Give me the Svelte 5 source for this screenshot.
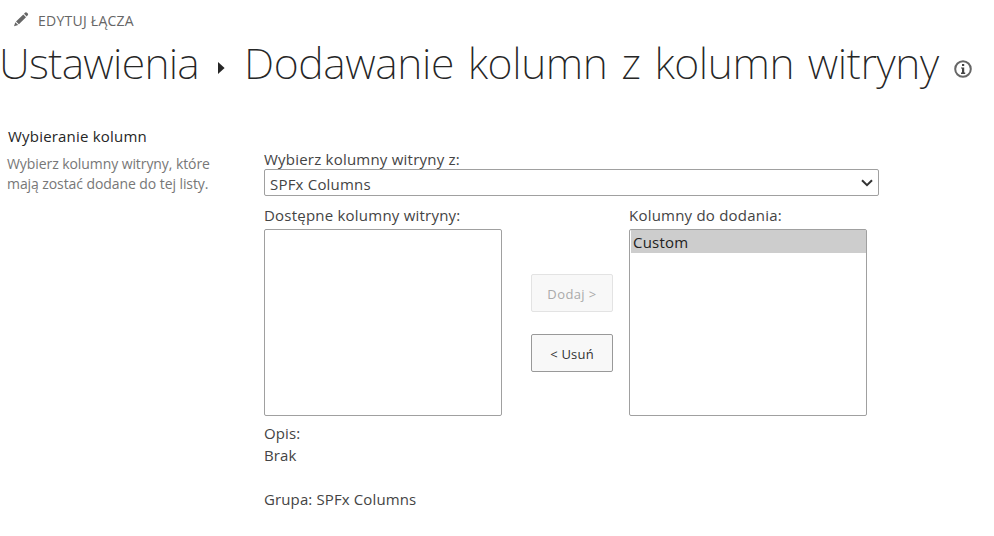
<script>
  let group = $state('SPFx Columns');
  const available = [];
  const added = ['Custom'];
</script>

<div class="page">
  <div class="edit-links">
    <svg width="15" height="15" viewBox="0 0 15 15" aria-hidden="true">
      <path fill="#666" d="M0 14.3 1.3 10.2 4.2 13ZM2 9.4 9.3 2.4 12 5.2 4.9 12.2ZM10 1.7 11.2.6Q12.1-.1 13 .7L13.8 1.5Q14.5 2.3 13.7 3.3L12.7 4.4Z" />
    </svg>
    <span>EDYTUJ ŁĄCZA</span>
  </div>

  <h1>
    <span class="t1">Ustawienia</span>
    <svg class="arrow" width="7" height="12" viewBox="0 0 7 12" aria-hidden="true"><path fill="#262626" d="M0 0 6.6 6 0 12Z" /></svg>
    <span class="t2">Dodawanie kolumn z kolumn witryny</span>
    <svg class="info" width="18" height="18" viewBox="0 0 18 18" aria-hidden="true">
      <circle cx="9" cy="9" r="7.8" fill="none" stroke="#666" stroke-width="2" />
      <path fill="#444" d="M8 4h2.2v2H8ZM7 7.4h3.2v5.2h1V14H7v-1.4h1V8.6H7Z" />
    </svg>
  </h1>

  <main>
    <section class="intro">
      <h2>Wybieranie kolumn</h2>
      <p>Wybierz kolumny witryny, które<br />mają zostać dodane do tej listy.</p>
    </section>

    <section class="form">
      <div class="label">Wybierz kolumny witryny z:</div>
      <div class="select">
        <span>{group}</span>
        <svg width="12" height="8" viewBox="0 0 12 8" aria-hidden="true"><path d="M1 1.2 6 6.2 11 1.2" fill="none" stroke="#333" stroke-width="2" /></svg>
      </div>

      <div class="picker">
        <div class="col">
          <div class="label">Dostępne kolumny witryny:</div>
          <div class="list">
            {#each available as name}<div class="option">{name}</div>{/each}
          </div>
        </div>
        <div class="buttons">
          <button disabled>Dodaj &gt;</button>
          <button>&lt; Usuń</button>
        </div>
        <div class="col">
          <div class="label">Kolumny do dodania:</div>
          <div class="list">
            {#each added as name}<div class="option">{name}</div>{/each}
          </div>
        </div>
      </div>

      <div class="details">
        <div>Opis:</div>
        <div>Brak</div>
        <div class="group">Grupa: {group}</div>
      </div>
    </section>
  </main>
</div>

<style>
  :global(body) { margin: 0; background: #fff; }
  .page {
    width: 994px; height: 536px; overflow: hidden; background: #fff;
    font-family: "Open Sans", "Noto Sans", sans-serif; font-size: 15px; color: #444;
    box-sizing: border-box;
  }
  .edit-links { display: flex; height: 38px; padding-left: 14px; align-items: flex-start; font-size: 14px; line-height: 20px; color: #666; }
  .edit-links svg { margin-top: 12px; }
  .edit-links span { margin: 11px 0 0 9px; letter-spacing: 0.25px; }
  h1 { display: flex; margin: 0; height: 52px; align-items: flex-start; font-family: "Noto Sans", "Open Sans", sans-serif; font-weight: 200; font-size: 43px; line-height: 50px; color: #262626; white-space: nowrap; }
  h1 span { display: block; flex: none; }
  .t1 { width: 219px; margin-left: -1px; letter-spacing: -0.7px; }
  .t2 { width: 710px; margin-left: 19px; letter-spacing: -0.38px; word-spacing: 3px; }
  .arrow { margin-top: 24px; flex: none; }
  .info { margin-top: 22px; flex: none; }
  main { display: flex; padding-top: 36px; }
  .intro { width: 264px; flex: none; white-space: nowrap; }
  h2 { margin: -1px 0 0 8px; font-size: 15px; font-weight: 400; line-height: 22px; letter-spacing: 0.2px; color: #262626; }
  p { margin: 7px 0 0 7px; font-size: 14px; line-height: 20px; letter-spacing: -0.08px; color: #777; }
  .form { padding-top: 22px; width: 615px; white-space: nowrap; letter-spacing: 0.2px; }
  .label { height: 21px; line-height: 22px; letter-spacing: 0.22px; }
  .select { display: flex; justify-content: space-between; align-items: center; box-sizing: border-box; height: 27px; padding: 2px 5px 0 5px; border: 1px solid #a0a0a0; border-radius: 2px; }
  .select svg { margin-top: -2px; }
  .picker { display: flex; padding-top: 8px; }
  .col { width: 238px; }
  .col .label { height: 25px; line-height: 23px; }
  .list { box-sizing: border-box; height: 187px; padding-left: 1px; border: 1px solid #a0a0a0; border-radius: 2px; }
  .option { height: 23px; line-height: 25px; padding-left: 2px; background: #cdcdcd; color: #222; }
  .buttons { width: 82px; margin: 70px 16px 0 29px; display: flex; flex-direction: column; gap: 22px; }
  button { box-sizing: border-box; width: 82px; height: 38px; padding: 2px 0 0; border: 1px solid #999; border-radius: 2px; background: #f8f8f8; color: #333; font: 13px "Open Sans", sans-serif; letter-spacing: 0.2px; }
  button:disabled { border-color: #e3e3e3; color: #aaa; letter-spacing: 0.4px; }
  .details { padding-top: 6px; line-height: 22px; letter-spacing: 0.12px; }
  .group { padding-top: 22px; }
</style>
